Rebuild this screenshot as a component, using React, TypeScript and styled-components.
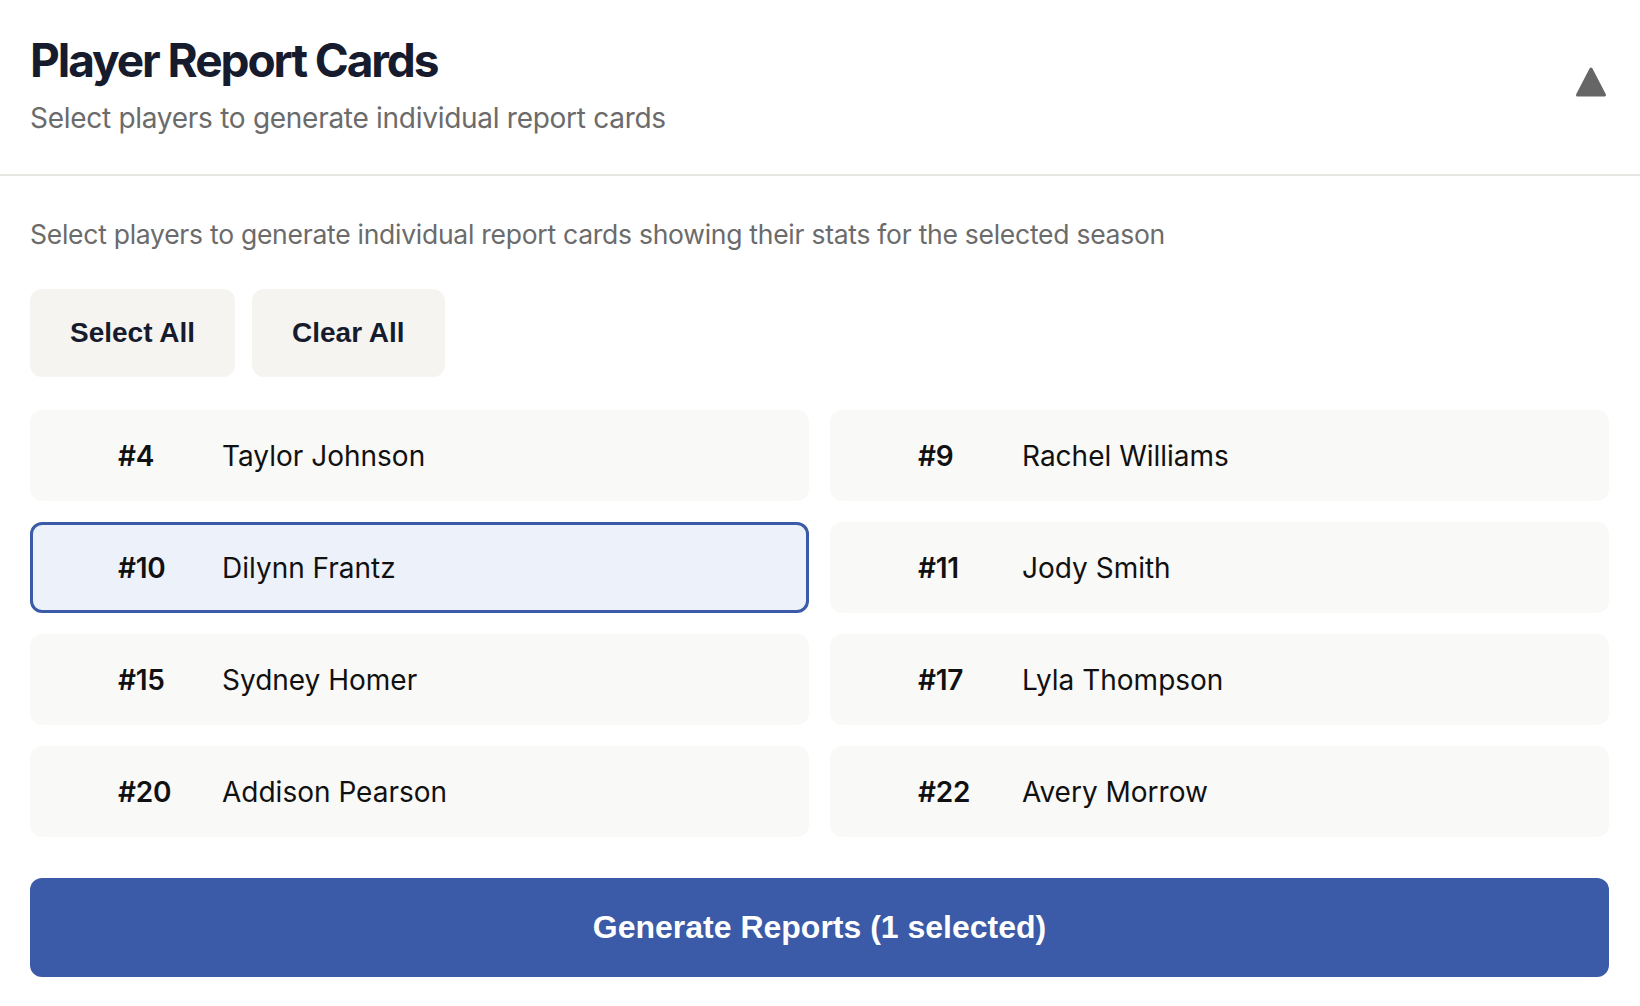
import React, { useState } from "react";
import styled, { createGlobalStyle } from "styled-components";

const GlobalStyle = createGlobalStyle`
  html, body {
    margin: 0;
    padding: 0;
    background: #ffffff;
  }
  body {
    font-family: Inter, "Noto Sans", sans-serif;
    -webkit-font-smoothing: antialiased;
  }
  * { box-sizing: border-box; }
`;

const Page = styled.div`
  width: 100%;
  min-height: 1006px;
  background: #ffffff;
`;

const Header = styled.header`
  display: flex;
  justify-content: space-between;
  align-items: flex-start;
  padding: 33px 33px 0 30px;
  height: 176px;
  border-bottom: 2px solid #e6e6e2;
`;

const TitleBlock = styled.div`
  display: flex;
  flex-direction: column;
`;

const Title = styled.h1`
  margin: 0;
  font-size: 46px;
  line-height: 54px;
  font-weight: 700;
  letter-spacing: -0.045em;
  color: #161b2d;
`;

const Subtitle = styled.p`
  margin: 10px 0 0;
  font-size: 28px;
  line-height: 42px;
  font-weight: 400;
  letter-spacing: -0.01em;
  color: #6b6b6b;
`;

const ToggleButton = styled.button`
  border: none;
  background: transparent;
  padding: 0;
  margin-top: 32px;
  width: 32px;
  height: 34px;
  display: flex;
  align-items: center;
  justify-content: center;
  cursor: pointer;
`;

const Content = styled.main`
  display: flex;
  flex-direction: column;
  padding: 37px 31px 29px 30px;
`;

const Description = styled.p`
  margin: 0;
  font-size: 26.5px;
  line-height: 42px;
  letter-spacing: -0.01em;
  color: #6b6b6b;
`;

const ActionRow = styled.div`
  display: flex;
  gap: 17px;
  margin-top: 34px;
`;

const SecondaryButton = styled.button`
  height: 88px;
  padding: 0 40px;
  border: none;
  border-radius: 12px;
  background: #f5f4f1;
  font-family: "Liberation Sans", Arial, sans-serif;
  font-size: 28px;
  font-weight: 700;
  color: #161b2d;
  cursor: pointer;
`;

const PlayerGrid = styled.div`
  display: grid;
  grid-template-columns: 1fr 1fr;
  column-gap: 21px;
  row-gap: 21px;
  margin-top: 33px;
`;

const PlayerCard = styled.label<{ $selected: boolean }>`
  display: flex;
  align-items: center;
  gap: 24px;
  height: 91px;
  padding: 0 24px 0 85px;
  border-radius: 12px;
  border: 3px solid ${(p) => (p.$selected ? "#3b5ba8" : "transparent")};
  background: ${(p) => (p.$selected ? "#edf2fa" : "#f9f9f7")};
  cursor: pointer;
`;

const HiddenCheck = styled.input`
  position: absolute;
  opacity: 0;
  width: 0;
  height: 0;
  pointer-events: none;
`;

const Number = styled.span`
  min-width: 80px;
  font-size: 28px;
  font-weight: 600;
  letter-spacing: -0.01em;
  color: #111111;
`;

const Name = styled.span`
  font-size: 28px;
  font-weight: 400;
  letter-spacing: 0;
  color: #111111;
`;

const PrimaryButton = styled.button`
  margin-top: 41px;
  height: 99px;
  width: 100%;
  border: none;
  border-radius: 12px;
  background: #3b5aa7;
  color: #ffffff;
  font-family: "Liberation Sans", Arial, sans-serif;
  font-size: 32px;
  font-weight: 700;
  cursor: pointer;
`;

const players = [
  { num: 4, name: "Taylor Johnson" },
  { num: 9, name: "Rachel Williams" },
  { num: 10, name: "Dilynn Frantz" },
  { num: 11, name: "Jody Smith" },
  { num: 15, name: "Sydney Homer" },
  { num: 17, name: "Lyla Thompson" },
  { num: 20, name: "Addison Pearson" },
  { num: 22, name: "Avery Morrow" },
];

export default function App() {
  const [selected, setSelected] = useState<number[]>([10]);

  const toggle = (n: number) =>
    setSelected((s) => (s.includes(n) ? s.filter((x) => x !== n) : [...s, n]));

  return (
    <Page>
      <GlobalStyle />
      <Header>
        <TitleBlock>
          <Title>Player Report Cards</Title>
          <Subtitle>Select players to generate individual report cards</Subtitle>
        </TitleBlock>
        <ToggleButton aria-label="Collapse">
          <svg width="32" height="34" viewBox="0 0 32 34">
            <path
              d="M16 4 L29.5 30 L2.5 30 Z"
              fill="#666666"
              stroke="#666666"
              strokeWidth="3"
              strokeLinejoin="round"
            />
          </svg>
        </ToggleButton>
      </Header>
      <Content>
        <Description>
          Select players to generate individual report cards showing their stats for the selected season
        </Description>
        <ActionRow>
          <SecondaryButton onClick={() => setSelected(players.map((p) => p.num))}>
            Select All
          </SecondaryButton>
          <SecondaryButton onClick={() => setSelected([])}>Clear All</SecondaryButton>
        </ActionRow>
        <PlayerGrid>
          {players.map((p) => {
            const isSel = selected.includes(p.num);
            return (
              <PlayerCard key={p.num} $selected={isSel}>
                <HiddenCheck type="checkbox" checked={isSel} onChange={() => toggle(p.num)} />
                <Number>#{p.num}</Number>
                <Name>{p.name}</Name>
              </PlayerCard>
            );
          })}
        </PlayerGrid>
        <PrimaryButton>Generate Reports ({selected.length} selected)</PrimaryButton>
      </Content>
    </Page>
  );
}
